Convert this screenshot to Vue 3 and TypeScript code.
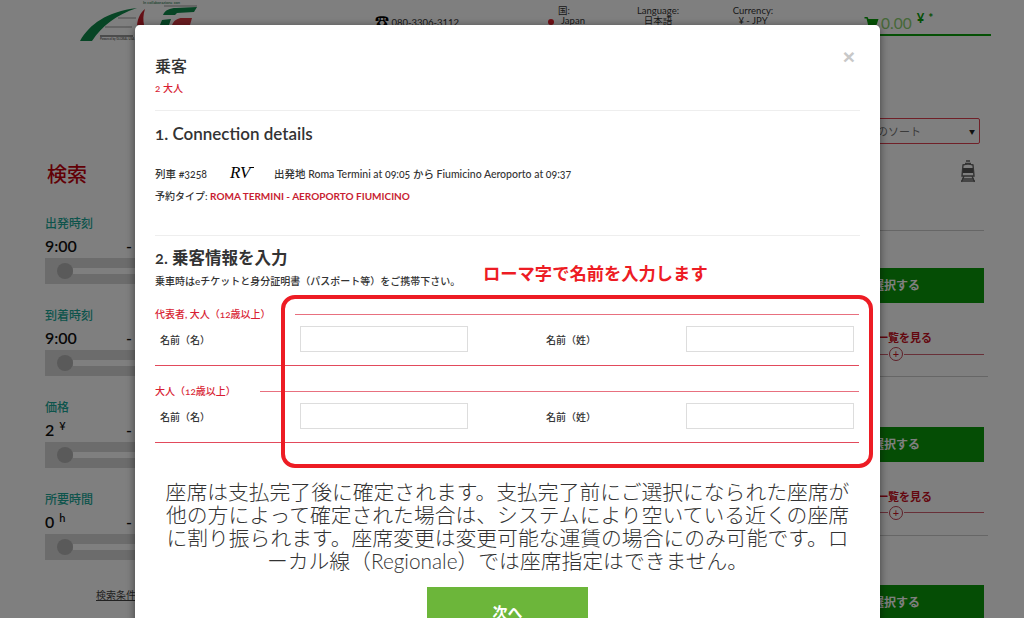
<script setup lang="ts">
interface Filter { label: string; value: string; unit?: string }
const filters: Filter[] = [
  { label: '出発時刻', value: '9:00' },
  { label: '到着時刻', value: '9:00' },
  { label: '価格', value: '2', unit: '¥' },
  { label: '所要時間', value: '0', unit: 'h' }
]
const passengers = [
  { title: '代表者, 大人（12歳以上）' },
  { title: '大人（12歳以上）' }
]
const seatLines = [
  '座席は支払完了後に確定されます。支払完了前にご選択になられた座席が',
  '他の方によって確定された場合は、システムにより空いている近くの座席',
  'に割り振られます。座席変更は変更可能な運賃の場合にのみ可能です。ロ',
  'ーカル線（Regionale）では座席指定はできません。'
]
</script>

<template>
  <div class="page">
    <header class="top">
      <div class="logo">
        <span class="collab">In collaborazione con</span>
        <svg width="120" height="42" viewBox="0 0 120 42">
          <path d="M0 41 C10 24 26 12 57 8 C36 15 22 26 12 41 Z" fill="#0f8a4a" />
          <path d="M57 25 C58 18 60 13 65 9 C63 15 63 20 64 25 Z" fill="#c8202c" />
          <path d="M38 18H56M25 27H52" stroke="#999" stroke-width="1" fill="none" />
          <path d="M20 36H53" stroke="#333" stroke-width="1" fill="none" />
          <path d="M84 6H117" stroke="#999" stroke-width="1" fill="none" />
          <path d="M83 15 C85 10 90 8 96 8 L117 7 L114 12 L97 13 L95 15 Z" fill="#0f8a4a" />
          <path d="M80 25 L82 20 L91 19 L89 25 Z" fill="#0f8a4a" />
          <path d="M92 25 C94 20 98 18 102 18 L112 18 L110 25 Z" fill="#d43a42" />
        </svg>
        <span class="powered">Powered by GLOBAL USA</span>
      </div>
      <div class="phone"><span class="phone-icon">☎</span> 080-3306-3112</div>
      <div class="meta flag"><span class="country">国:</span><span class="japan"><i class="dot"></i>Japan</span></div>
      <div class="meta lang"><span>Language:</span><span>日本語</span></div>
      <div class="meta cur"><span>Currency:</span><span>¥ - JPY</span></div>
      <div class="cart">
        <svg width="15" height="12" viewBox="0 0 14 12"><path d="M0 0H3L4 2H14L12 8H5L4.500 10H12V11.500H3L3.500 7.500L2 1.500H0Z" fill="#0aa00a"/></svg>
        <span class="amount">0.00</span><span class="yen">¥</span><span class="star">*</span>
      </div>
    </header>

    <div class="body">
      <aside class="side">
        <h2 class="search">検索</h2>
        <div v-for="f in filters" :key="f.label" class="filter">
          <div class="f-label">{{ f.label }}</div>
          <div class="f-value"><span>{{ f.value }}<sup v-if="f.unit">{{ f.unit }}</sup></span><span>-</span></div>
          <div class="track"><i class="knob"></i><i class="rail"></i></div>
        </div>
        <a class="reset">検索条件をリセット</a>
      </aside>

      <main class="results">
        <div class="sort"><span class="sort-text">のソート</span><span class="caret">▼</span></div>
        <svg class="train" width="16" height="23" viewBox="0 0 16 23">
          <path d="M6 1H10M5 3.500H11M3 5 Q8 3 13 5 L14 16 H2 Z M4 16 L1.500 22M12 16 L14.500 22M1 21H15M2 19H14" fill="none" stroke="#666" stroke-width="1.400" />
          <rect x="3" y="8" width="10" height="5" fill="#555" />
        </svg>
        <hr class="first-rule" />
        <div v-for="n in 3" :key="n" class="result">
          <div class="select">選択する</div>
          <div class="more">
            <span>一覧を見る</span>
            <div class="more-line"><i></i><b>+</b><i class="long"></i></div>
          </div>
          <hr class="rule" />
        </div>
      </main>
    </div>

    <div class="overlay"></div>

    <section class="modal">
      <button class="close" type="button">×</button>
      <h3 class="title">乗客</h3>
      <p class="count">2 大人</p>
      <hr class="divider" />

      <h4 class="heading h-one">1. Connection details</h4>
      <div class="conn">
        <span class="train-no">列車 #3258</span>
        <span class="rv">RV</span>
        <span>出発地 Roma Termini at 09:05 から Fiumicino Aeroporto at 09:37</span>
      </div>
      <p class="type">予約タイプ: <em>ROMA TERMINI - AEROPORTO FIUMICINO</em></p>
      <hr class="divider d2" />

      <h4 class="heading h-two">2. 乗客情報を入力</h4>
      <p class="note">乗車時はeチケットと身分証明書（パスポート等）をご携帯下さい。</p>

      <div v-for="p in passengers" :key="p.title" class="pax">
        <div class="pax-head"><span>{{ p.title }}</span><i></i></div>
        <div class="pax-row">
          <label>名前（名）</label><input type="text" />
          <label class="second">名前（姓）</label><input type="text" />
        </div>
        <div class="pax-foot"></div>
      </div>

      <p class="seat"><span v-for="l in seatLines" :key="l">{{ l }}</span></p>
      <button class="next" type="button">次へ</button>

      <div class="callout">ローマ字で名前を入力します</div>
      <div class="redbox"></div>
    </section>
  </div>
</template>

<style>
html, body { margin: 0; overflow: hidden; }
</style>

<style scoped>
.page {
  position: relative;
  width: 1024px;
  height: 618px;
  overflow: hidden;
  background: #fff;
  font-family: Lato, "Noto Sans CJK JP", sans-serif;
  color: #333;
}
.top { display: flex; height: 36px; }
.logo { width: 120px; margin-left: 80px; position: relative; height: 42px; flex: none; }
.logo svg { display: block; }
.collab { position: absolute; left: 63px; top: 0; font-size: 4px; line-height: 5px; white-space: nowrap; color: #0b6d3b; }
.powered { position: absolute; left: 20px; top: 37px; font-size: 3px; line-height: 4px; white-space: nowrap; }
.phone { margin: 13px 0 0 175px; width: 135px; flex: none; font-size: 9.500px; line-height: 16px; white-space: nowrap; }
.phone-icon { font-size: 14px; color: #000; }
.meta { display: flex; flex-direction: column; align-items: center; font-size: 9.500px; line-height: 10px; padding-top: 6px; flex: none; }
.flag { width: 40px; margin-left: 43px; }
.country { margin-right: 18px; }
.japan { position: relative; }
.lang { width: 60px; margin-left: 35px; }
.cur { width: 60px; margin-left: 35px; }
.dot { position: absolute; left: -13px; top: 3px; width: 6px; height: 6px; border-radius: 50%; background: #e0202c; }
.cart { margin-left: 81px; width: 127px; flex: none; box-sizing: content-box; height: 20px; padding-top: 14px; border-bottom: 2px solid #0aa00a; color: #8cd070; font-size: 15.500px; line-height: 18px; display: flex; align-items: flex-start; }
.cart svg { margin-top: 3px; margin-right: 2px; flex: none; }
.yen { font-size: 13px; line-height: 14px; color: #0aa00a; margin: -3px 0 0 5px; font-weight: 700; }
.star { font-size: 12px; line-height: 14px; color: #0aa00a; margin: -3px 0 0 4px; font-weight: 700; }

.body { display: flex; }
.side { width: 135px; flex: none; padding: 126px 0 0 45px; box-sizing: border-box; }
.search { margin: 0 0 30px 2px; font-size: 20px; line-height: 24px; color: #c4000c; font-weight: 500; }
.filter { height: 92px; width: 90px; }
.f-label { font-size: 12px; line-height: 16px; color: #1aa898; font-weight: 500; }
.f-value { display: flex; justify-content: space-between; width: 87px; margin-top: 5px; font-size: 16px; line-height: 18px; color: #111; font-weight: 600; }
.f-value sup { font-size: 11px; margin-left: 5px; line-height: 0; }
.track { position: relative; height: 26px; margin-top: 3px; background: #d8d8d8; width: 110px; }
.knob { position: absolute; left: 12px; top: 5px; width: 16px; height: 16px; border-radius: 50%; background: #b4b4b4; }
.rail { position: absolute; left: 28px; right: 0; top: 10px; height: 6px; background: #fff; }
.reset { display: block; margin: 4px 0 0 51px; font-size: 10px; line-height: 14px; text-decoration: underline; white-space: nowrap; color: #444; }

.results { flex: 1; padding: 82px 40px 0 0; display: flex; flex-direction: column; align-items: flex-end; }
.sort { width: 144px; height: 26px; margin-right: 4px; box-sizing: border-box; border: 1px solid #e04050; border-radius: 2px; font-size: 11px; color: #777; display: flex; justify-content: space-between; align-items: center; padding: 0 4px 0 40px; white-space: nowrap; }
.caret { font-size: 6px; color: #222; }
.train { margin: 16px 8px 0 0; flex: none; }
.first-rule { align-self: flex-end; width: 104px; margin: 47px 0 0; border: 0; border-top: 1px solid #ccc; }
.result { width: 176px; margin-top: 37px; margin-bottom: -37px; }
.select { height: 35px; background: #0a9a0a; color: #fff; font-size: 12px; font-weight: 600; line-height: 35px; text-align: center; }
.more { margin-top: 28px; padding-left: 69px; color: #c80f1e; font-size: 11px; font-weight: 600; line-height: 14px; white-space: nowrap; }
.more-line { display: flex; align-items: center; height: 14px; margin-top: 2px; margin-left: 3px; }
.more-line i { height: 1px; background: #d06070; width: 8px; flex: none; }
.more-line i.long { flex: 1; }
.more-line b { width: 14px; height: 14px; box-sizing: border-box; border: 1px solid #c04050; border-radius: 50%; font-size: 11px; line-height: 11px; text-align: center; margin: 0 1px; font-weight: 400; flex: none; }
.rule { margin: 15px -4px 49.500px 0; border: 0; border-top: 1px solid #ccc; }

.overlay { position: absolute; inset: 0; background: rgba(0, 0, 0, .5); }

.modal {
  position: absolute;
  left: 135px;
  top: 25px;
  width: 745px;
  height: 640px;
  background: #fff;
  border-radius: 5px;
  box-shadow: 0 2px 8px rgba(0, 0, 0, .5);
  padding: 30px 20px 0;
  box-sizing: border-box;
  color: #333;
  font-variant-numeric: oldstyle-nums;
}
.close { position: absolute; right: 25px; top: 20px; border: 0; background: none; padding: 0; font: 700 21px/24px "Liberation Sans", sans-serif; color: #c8c8c8; }
.title { margin: 0; font-size: 16px; line-height: 22px; font-weight: 500; color: #333; }
.count { margin: 4px 0 0; font-size: 10px; line-height: 14px; color: #d81e34; font-weight: 500; }
.divider { margin: 15px 0 0; border: 0; border-top: 1px solid #eee; }
.heading { margin: 0; font-weight: 600; color: #333; }
.h-one { margin-top: 12px; font-size: 17px; line-height: 22px; }
.conn { display: flex; align-items: center; margin-top: 18px; height: 20px; font-size: 10.500px; font-weight: 500; white-space: nowrap; }
.train-no { width: 75px; flex: none; }
.rv { width: 44px; flex: none; font: italic 400 17px/20px "Liberation Serif", serif; color: #000; position: relative; }
.rv::after { content: ""; position: absolute; left: 20px; top: 4px; width: 4px; height: 1px; background: #000; }
.type { margin: 5px 0 0; font-size: 10px; line-height: 16px; font-weight: 500; }
.type em { font-style: normal; color: #c81e32; font-weight: 700; }
.d2 { margin-top: 31px; }
.h-two { margin-top: 10px; font-size: 16.500px; line-height: 24px; }
.note { margin: 4px 0 0; font-size: 10px; line-height: 14px; font-weight: 500; }
.pax { margin-top: 17px; width: 704px; }
.pax + .pax { margin-top: 16px; }
.pax-head { display: flex; align-items: center; gap: 24px; height: 16px; font-size: 10px; font-weight: 500; color: #d81e34; white-space: nowrap; }
.pax-head i { flex: 1; height: 1px; background: #e8707f; margin-top: 2px; }
.pax-row { display: flex; align-items: center; margin-top: 5px; font-size: 10px; font-weight: 500; }
.pax-row label { width: 145px; padding-left: 5px; box-sizing: border-box; flex: none; }
.pax-row label.second { width: 218px; padding-left: 78px; }
.pax-row input { width: 168px; height: 26px; box-sizing: border-box; border: 1px solid #ddd; background: #fff; flex: none; padding: 0; margin: 0; outline: 0; }
.pax-foot { height: 1px; margin-top: 13px; background: #e24a5c; }
.seat { margin: 37px 0 0; font-size: 20.800px; line-height: 23px; text-align: center; font-weight: 300; color: #333; }
.seat span { display: block; white-space: nowrap; }
.next { display: block; margin: 15px auto 0; width: 161px; height: 54px; border: 0; background: #6cb63a; color: #fff; font: 700 15px/50px Lato, "Noto Sans CJK JP", sans-serif; padding: 0 0 4px; }

.callout { position: absolute; left: 348px; top: 239px; font-size: 17.300px; line-height: 20px; font-weight: 700; color: #ed1c24; white-space: nowrap; }
.redbox { position: absolute; left: 146px; top: 270px; width: 592px; height: 173px; border: 4px solid #ed1c24; border-radius: 14px; box-sizing: border-box; }
</style>
